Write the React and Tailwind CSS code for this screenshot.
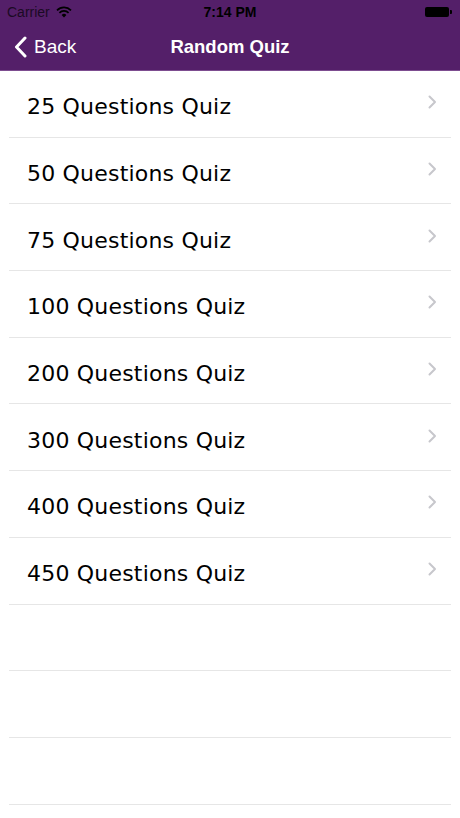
import React from "react";

const quizzes = [25, 50, 75, 100, 200, 300, 400, 450];

const Chevron = () => (
  <svg width="9" height="14" viewBox="0 0 9 14" fill="none">
    <path d="M1.5 1.5 L7 7 L1.5 12.5" stroke="#c7c7cc" strokeWidth="2" strokeLinecap="round" strokeLinejoin="round" />
  </svg>
);

const App = () => {
  return (
    <main className="w-[460px] h-[818px] bg-white overflow-hidden font-['Liberation_Sans',Arial,sans-serif]">
      <header className="bg-[#541f69] h-[71px] border-b border-[#7d4d90] flex flex-col">
        <div className="h-[24px] flex items-center justify-between px-[7px] text-[14px] text-black">
          <div className="flex items-center gap-[6px] w-[120px]">
            <span className="text-[#1b0a24]">Carrier</span>
            <svg width="16" height="12" viewBox="0 0 16 12">
              <path d="M8 11.5 L5.6 9 A3.4 3.4 0 0 1 10.4 9 Z" fill="#000" />
              <path d="M3.4 6.8 A6.5 6.5 0 0 1 12.6 6.8" stroke="#000" strokeWidth="1.7" fill="none" />
              <path d="M1 4.3 A10 10 0 0 1 15 4.3" stroke="#000" strokeWidth="1.7" fill="none" />
            </svg>
          </div>
          <span className="font-bold text-[14px]">7:14 PM</span>
          <div className="w-[120px] flex justify-end pr-[1px]">
            <div className="flex items-center">
              <div className="w-[24px] h-[10px] bg-black rounded-[2px]" />
              <div className="w-[2px] h-[4px] bg-black rounded-r-[1px] ml-[1px]" />
            </div>
          </div>
        </div>
        <nav className="flex-1 flex items-center relative">
          <button className="flex items-center gap-[7px] pl-[14px] text-white text-[19px]">
            <svg width="13" height="22" viewBox="0 0 13 22" fill="none">
              <path d="M11 2 L2.5 11 L11 20" stroke="#fff" strokeWidth="3" strokeLinecap="round" strokeLinejoin="round" />
            </svg>
            <span>Back</span>
          </button>
          <h1 className="absolute left-0 right-0 text-center text-white text-[18.5px] font-bold pointer-events-none">
            Random Quiz
          </h1>
        </nav>
      </header>

      <ul>
        {quizzes.map((n) => (
          <li key={n} className="h-[66.7px] mx-[9px] border-b border-[#e6e6e6] flex items-center justify-between pl-[18px] pr-[14px]">
            <span className="text-[22px] text-black tracking-[0.2px] font-['DejaVu_Sans',sans-serif] mt-[6px]">
              {n} Questions Quiz
            </span>
            <span className="-mt-[3px]">
              <Chevron />
            </span>
          </li>
        ))}
        {[0, 1, 2].map((i) => (
          <li key={"e" + i} className="h-[66.7px] mx-[9px] border-b border-[#e6e6e6]" />
        ))}
      </ul>
    </main>
  );
};

export default App;
